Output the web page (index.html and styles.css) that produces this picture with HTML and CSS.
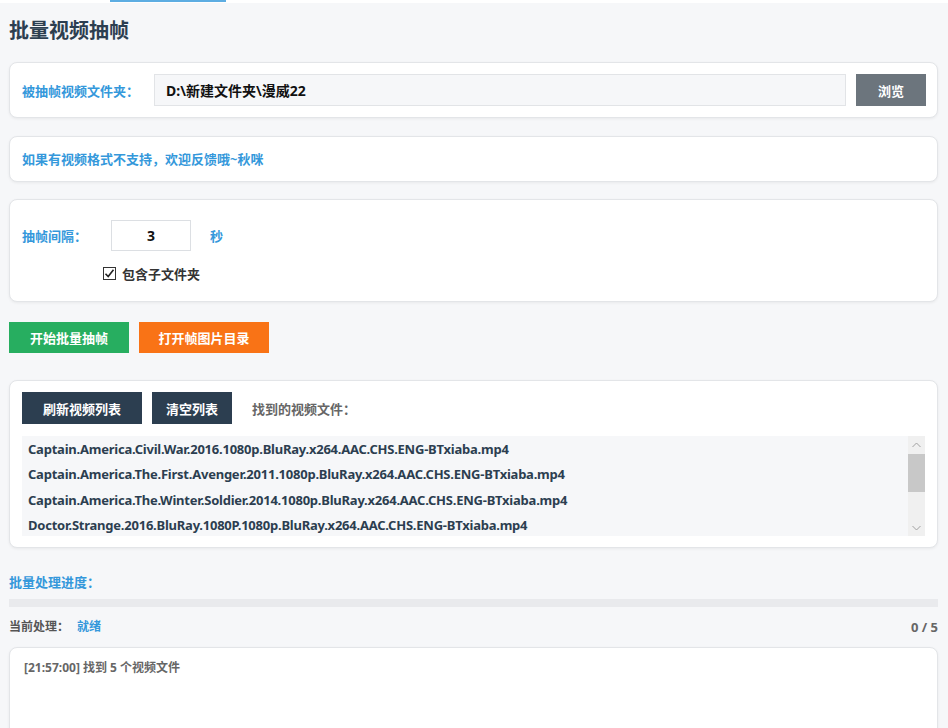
FILE: index.html
```html
<!DOCTYPE html>
<html lang="zh-CN">
<head>
    <meta charset="UTF-8">
    <meta name="viewport" content="width=device-width, initial-scale=1.0">
    <title>批量视频抽帧</title>
    <link rel="stylesheet" href="styles.css">
</head>
<body>

<div class="tab-strip"><span class="tab-active"></span></div>

<div class="page">
    <h1>批量视频抽帧</h1>

    <div class="card folder-card">
        <label class="field-label" for="folder">被抽帧视频文件夹：</label>
        <input type="text" id="folder" class="folder-input" value="D:\新建文件夹\漫威22">
        <button class="btn btn-gray">浏览</button>
    </div>

    <div class="card notice-card">如果有视频格式不支持，欢迎反馈哦~秋咪</div>

    <div class="card settings-card">
        <div class="interval-row">
            <label class="field-label interval-label" for="interval">抽帧间隔：</label>
            <input type="text" id="interval" class="interval-input" value="3">
            <span class="unit">秒</span>
        </div>
        <label class="check-row">
            <span class="check-box">
                <svg width="11" height="11" viewBox="0 0 11 11"><path d="M1.5 5.8 L4.2 8.5 L9.5 1.8" fill="none" stroke="#222" stroke-width="1.6"/></svg>
            </span>
            <span>包含子文件夹</span>
        </label>
    </div>

    <div class="actions">
        <button class="btn btn-green">开始批量抽帧</button>
        <button class="btn btn-orange">打开帧图片目录</button>
    </div>

    <div class="card list-card">
        <div class="list-toolbar">
            <button class="btn btn-dark btn-wide">刷新视频列表</button>
            <button class="btn btn-dark btn-narrow">清空列表</button>
            <span class="found-label">找到的视频文件：</span>
        </div>
        <div class="list-box">
            <ul class="file-list">
                <li>Captain.America.Civil.War.2016.1080p.BluRay.x264.AAC.CHS.ENG-BTxiaba.mp4</li>
                <li>Captain.America.The.First.Avenger.2011.1080p.BluRay.x264.AAC.CHS.ENG-BTxiaba.mp4</li>
                <li>Captain.America.The.Winter.Soldier.2014.1080p.BluRay.x264.AAC.CHS.ENG-BTxiaba.mp4</li>
                <li>Doctor.Strange.2016.BluRay.1080P.1080p.BluRay.x264.AAC.CHS.ENG-BTxiaba.mp4</li>
                <li>Thor.Ragnarok.2017.1080p.BluRay.x264.AAC.CHS.ENG-BTxiaba.mp4</li>
            </ul>
            <div class="scrollbar">
                <span class="scroll-arrow">
                    <svg width="9" height="6" viewBox="0 0 9 6"><path d="M0.5 5 L4.5 1 L8.5 5" fill="none" stroke="#a0a0a0" stroke-width="1"/></svg>
                </span>
                <span class="scroll-track"><span class="scroll-thumb"></span></span>
                <span class="scroll-arrow">
                    <svg width="9" height="6" viewBox="0 0 9 6"><path d="M0.5 1 L4.5 5 L8.5 1" fill="none" stroke="#a0a0a0" stroke-width="1"/></svg>
                </span>
            </div>
        </div>
    </div>

    <div class="progress-label">批量处理进度：</div>
    <div class="progress-bar"><div class="progress-fill" style="width: 0%"></div></div>
    <div class="status-row">
        <span class="status-key">当前处理：</span>
        <span class="status-value">就绪</span>
        <span class="status-count">0 / 5</span>
    </div>

    <div class="card log-card">
        <div class="log-line">[21:57:00] 找到 5 个视频文件</div>
    </div>
</div>

</body>
</html>
```

FILE: styles.css
```css
body {
    font-family: "Noto Sans", "Noto Sans CJK SC", sans-serif;
    background-color: #f6f7f9;
    margin: 0;
    padding: 0;
    color: #2c3e50;
}

.tab-strip {
    height: 3px;
    background-color: #fff;
    position: relative;
}

.tab-active {
    position: absolute;
    left: 110px;
    top: 0;
    width: 116px;
    height: 2px;
    background-color: #5dade2;
}

.page {
    padding: 0 10px 0 9px;
}

h1 {
    font-size: 20px;
    line-height: 28px;
    margin: 14px 0 17px;
    color: #2c3e50;
}

.card {
    background-color: #fff;
    border: 1px solid #e3e5e8;
    border-radius: 8px;
    box-shadow: 0 1px 3px rgba(0, 0, 0, 0.06);
}

.field-label {
    color: #3498db;
    font-weight: bold;
    font-size: 13px;
}

.folder-card {
    display: flex;
    align-items: center;
    padding: 11px 11px 11px 12px;
}

.folder-card .field-label {
    width: 132px;
}

.folder-input {
    flex: 1;
    height: 32px;
    box-sizing: border-box;
    padding: 0 11px;
    border: 1px solid #e2e4e7;
    background-color: #f6f7f9;
    font-family: inherit;
    font-size: 14px;
    font-weight: bold;
    color: #111;
    outline: none;
}

.btn {
    border: none;
    color: #fff;
    font-family: inherit;
    font-weight: bold;
    font-size: 13px;
    height: 32px;
    cursor: pointer;
}

.btn-gray {
    background-color: #6c757d;
    width: 70px;
    margin-left: 10px;
}

.notice-card {
    margin-top: 18px;
    padding: 13px 12px 13px 12px;
    line-height: 18px;
    color: #3498db;
    font-weight: bold;
    font-size: 13px;
}

.settings-card {
    margin-top: 17px;
    padding: 20px 12px 19px;
}

.interval-row {
    display: flex;
    align-items: center;
}

.interval-label {
    width: 89px;
}

.interval-input {
    width: 80px;
    height: 31px;
    box-sizing: border-box;
    border: 1px solid #dcdfe3;
    text-align: center;
    font-family: inherit;
    font-size: 14px;
    font-weight: bold;
    color: #111;
    outline: none;
}

.unit {
    margin-left: 19px;
    color: #3498db;
    font-weight: bold;
    font-size: 13px;
}

.check-row {
    display: flex;
    align-items: center;
    margin: 13px 0 0 81px;
    height: 18px;
    font-size: 13px;
    font-weight: bold;
    color: #333;
}

.check-box {
    display: flex;
    align-items: center;
    justify-content: center;
    width: 11px;
    height: 11px;
    border: 1px solid #333;
    background-color: #fff;
    margin-right: 6px;
}

.actions {
    display: flex;
    gap: 10px;
    margin-top: 20px;
}

.btn-green {
    background-color: #27ae60;
    width: 120px;
    height: 31px;
}

.btn-orange {
    background-color: #f97316;
    width: 130px;
    height: 31px;
}

.list-card {
    margin-top: 27px;
    padding: 11px 12px 11px 12px;
}

.list-toolbar {
    display: flex;
    align-items: center;
    gap: 10px;
}

.btn-dark {
    background-color: #2c3e50;
}

.btn-wide {
    width: 120px;
}

.btn-narrow {
    width: 80px;
}

.found-label {
    margin-left: 10px;
    color: #666;
    font-weight: bold;
    font-size: 13px;
}

.list-box {
    display: flex;
    margin-top: 12px;
    height: 100px;
    background-color: #f6f7f9;
}

.file-list {
    flex: 1;
    list-style: none;
    margin: 0;
    padding: 1px 0 0;
    overflow: hidden;
}

.file-list li {
    padding: 0 6px;
    line-height: 25.3px;
    font-size: 13px;
    font-weight: bold;
    letter-spacing: -0.23px;
    color: #2c3e50;
    white-space: nowrap;
}

.scrollbar {
    display: flex;
    flex-direction: column;
    width: 17px;
    background-color: #f0f0f0;
}

.scroll-arrow {
    display: flex;
    align-items: center;
    justify-content: center;
    height: 17px;
}

.scroll-track {
    flex: 1;
    padding-top: 1px;
}

.scroll-thumb {
    display: block;
    height: 38px;
    background-color: #c8c8c8;
}

.progress-label {
    margin-top: 25px;
    line-height: 18px;
    color: #3498db;
    font-weight: bold;
    font-size: 13px;
}

.progress-bar {
    margin-top: 8px;
    height: 8px;
    background-color: #e9eaed;
}

.progress-fill {
    height: 100%;
    background-color: #3498db;
}

.status-row {
    display: flex;
    align-items: center;
    margin-top: 11px;
    line-height: 18px;
    font-size: 12px;
    font-weight: bold;
}

.status-key {
    color: #555;
    width: 68px;
}

.status-value {
    color: #3498db;
}

.status-count {
    margin-left: auto;
    color: #666;
    font-size: 13px;
}

.log-card {
    margin-top: 11px;
    min-height: 120px;
    padding: 12px 14px;
}

.log-line {
    color: #666;
    font-size: 12px;
    font-weight: bold;
    line-height: 16px;
}
```
